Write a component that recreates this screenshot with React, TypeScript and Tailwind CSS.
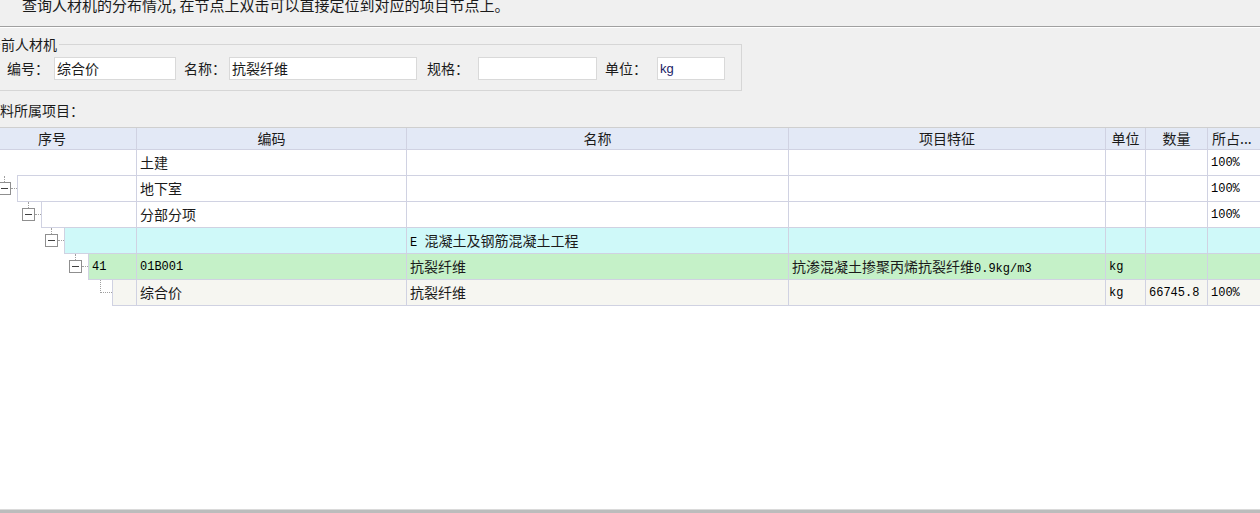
import React from "react";

const MONO = "font-['Liberation_Mono',monospace] text-[12px] text-black";

const Box = () => (
  <div className="flex flex-col items-center w-[13px] shrink-0">
    <div className="h-[6px] border-l border-dotted border-[#a0a0a0]" />
    <div className="w-[13px] h-[13px] border border-[#8f8f8f] bg-white flex items-center justify-center">
      <div className="w-[7px] h-px bg-[#404040]" />
    </div>
  </div>
);

const Conn = () => (
  <div className="w-[6px] mt-[12px] self-start border-t border-dotted border-[#a0a0a0] shrink-0" />
);

type RowProps = {
  bg: string;
  tree: React.ReactNode;
  c1?: React.ReactNode;
  c2?: React.ReactNode;
  c3?: React.ReactNode;
  c4?: React.ReactNode;
  c5?: React.ReactNode;
  c6?: React.ReactNode;
  c7?: React.ReactNode;
  noLeft?: boolean;
};

function Row({ bg, tree, c1, c2, c3, c4, c5, c6, c7, noLeft }: RowProps) {
  const cell = `h-[26px] border-b border-[#d0d2e2] flex items-center pl-[3px] overflow-hidden whitespace-nowrap ${bg}`;
  return (
    <div className="flex h-[26px]">
      <div className="w-[137px] flex shrink-0 bg-white">
        {tree}
        <div className={`flex-1 border-r ${noLeft ? "" : "border-l"} ${cell}`}>{c1}</div>
      </div>
      <div className={`w-[270px] shrink-0 border-r ${cell}`}>{c2}</div>
      <div className={`w-[382px] shrink-0 border-r ${cell}`}>{c3}</div>
      <div className={`w-[317px] shrink-0 border-r ${cell}`}>{c4}</div>
      <div className={`w-[40px] shrink-0 border-r ${cell}`}>{c5}</div>
      <div className={`w-[62px] shrink-0 border-r ${cell}`}>{c6}</div>
      <div className={`flex-1 ${cell}`}>{c7}</div>
    </div>
  );
}

const Input = ({ w, children, latin }: { w: string; children?: React.ReactNode; latin?: boolean }) => (
  <div
    className={`${w} h-[23px] shrink-0 bg-white border border-[#d9d9d9] flex items-center pl-[2px] ${
      latin ? "font-['Liberation_Sans',sans-serif] text-[13px] text-[#222266]" : "text-[14px]"
    }`}
  >
    {children}
  </div>
);

export default function App() {
  return (
    <div className="w-[1260px] h-[513px] bg-[#f0f0f0] overflow-hidden flex flex-col font-['Noto_Sans_CJK_SC','Noto_Sans',sans-serif] text-[#1b1b1b]">
      {/* top hint */}
      <div className="h-[27px] shrink-0 border-b border-[#a0a0a0] overflow-hidden">
        <div className="pl-[22px] text-[15px] leading-[15px] -mt-[3px] whitespace-nowrap">
          查询人材机的分布情况, 在节点上双击可以直接定位到对应的项目节点上。
        </div>
      </div>
      <div className="h-px bg-white shrink-0" />

      {/* group box */}
      <div className="shrink-0 relative ml-[-10px] mt-[16px] w-[752px] h-[47px] border border-[#d6d6d6]">
        <div className="absolute left-[10px] top-[-9px] pr-[2px] bg-[#f0f0f0] text-[14px] leading-[16px]">前人材机</div>
        <div className="flex items-center pl-[16px] pt-[12px] text-[14px]">
          <span className="w-[47px] shrink-0">编号：</span>
          <Input w="w-[122px]">综合价</Input>
          <span className="ml-[8px] w-[45px] shrink-0">名称：</span>
          <Input w="w-[188px]">抗裂纤维</Input>
          <span className="ml-[10px] w-[51px] shrink-0">规格：</span>
          <Input w="w-[119px]" />
          <span className="ml-[8px] w-[52px] shrink-0">单位：</span>
          <Input w="w-[68px]" latin>
            kg
          </Input>
        </div>
      </div>

      <div className="shrink-0 mt-[10px] mb-[8px] text-[14px] leading-[18px] whitespace-nowrap">料所属项目：</div>

      {/* table */}
      <div className="flex-1 bg-white border-t border-[#cfcfcf] flex flex-col text-[14px] overflow-hidden">
        <div className="flex h-[22px] shrink-0 bg-[#e3e9f6] border-b border-[#d0d2e2] leading-[21px]">
          <div className="w-[137px] shrink-0 border-r border-[#d0d2e2] pl-[38px]">序号</div>
          <div className="w-[270px] shrink-0 border-r border-[#d0d2e2] text-center">编码</div>
          <div className="w-[382px] shrink-0 border-r border-[#d0d2e2] text-center">名称</div>
          <div className="w-[317px] shrink-0 border-r border-[#d0d2e2] text-center">项目特征</div>
          <div className="w-[40px] shrink-0 border-r border-[#d0d2e2] text-center">单位</div>
          <div className="w-[62px] shrink-0 border-r border-[#d0d2e2] text-center">数量</div>
          <div className="flex-1 pl-[4px] whitespace-nowrap overflow-hidden">所占...</div>
        </div>

        <Row
          bg="bg-white"
          noLeft
          tree={<div className="w-[17px] shrink-0" />}
          c2="土建"
          c7={<span className={MONO}>100%</span>}
        />
        <Row
          bg="bg-white"
          tree={
            <div className="flex shrink-0 ml-[-2px]">
              <Box />
              <Conn />
            </div>
          }
          c2="地下室"
          c7={<span className={MONO}>100%</span>}
        />
        <Row
          bg="bg-white"
          tree={
            <div className="flex shrink-0 pl-[22px]">
              <Box />
              <Conn />
            </div>
          }
          c2="分部分项"
          c7={<span className={MONO}>100%</span>}
        />
        <Row
          bg="bg-[#cff9f9]"
          tree={
            <div className="flex shrink-0 pl-[45px]">
              <Box />
              <Conn />
            </div>
          }
          c3={
            <span>
              <span className={MONO}>E </span>混凝土及钢筋混凝土工程
            </span>
          }
        />
        <Row
          bg="bg-[#c5f1c8]"
          tree={
            <div className="flex shrink-0 pl-[69px]">
              <Box />
              <Conn />
            </div>
          }
          c1={<span className={MONO}>41</span>}
          c2={<span className={MONO}>01B001</span>}
          c3="抗裂纤维"
          c4={
            <span>
              抗渗混凝土掺聚丙烯抗裂纤维<span className={MONO}>0.9kg/m3</span>
            </span>
          }
          c5={<span className={MONO}>kg</span>}
        />
        <Row
          bg="bg-[#f6f6f1]"
          tree={
            <div className="flex shrink-0 pl-[100px]">
              <div className="w-[12px] h-[13px] border-l border-b border-dotted border-[#a0a0a0]" />
            </div>
          }
          c2="综合价"
          c3="抗裂纤维"
          c5={<span className={MONO}>kg</span>}
          c6={<span className={MONO}>66745.8</span>}
          c7={<span className={MONO}>100%</span>}
        />
      </div>
      <div className="h-px bg-[#dadada] shrink-0" />
      <div className="h-[3px] bg-[#bcbcbc] shrink-0" />
    </div>
  );
}
